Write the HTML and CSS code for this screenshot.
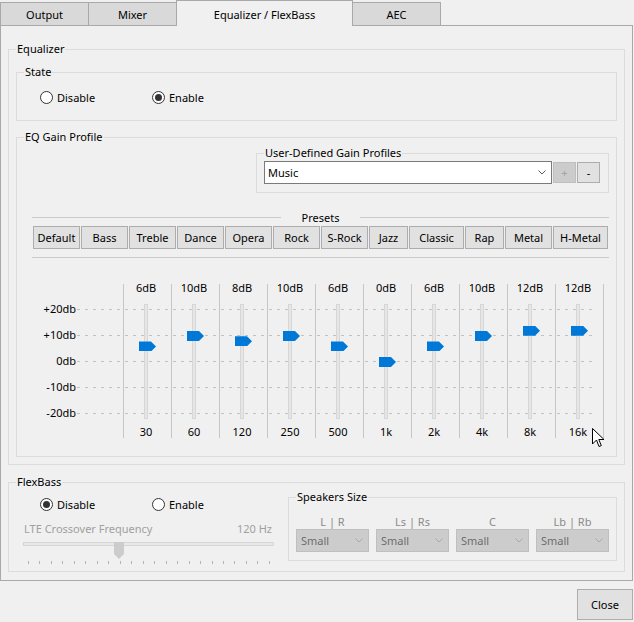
FILE: index.html
```html
<!DOCTYPE html>
<html>
<head>
<meta charset="utf-8">
<link rel="stylesheet" href="styles.css">
</head>
<body>
<div class="window">
  <div class="tabs">
    <div class="tab">Output</div>
    <div class="tab">Mixer</div>
    <div class="tab active">Equalizer / FlexBass</div>
    <div class="tab">AEC</div>
  </div>
  <div class="panel">
    <fieldset class="group eq">
      <legend>Equalizer</legend>
      <fieldset class="group state">
        <legend>State</legend>
        <div class="radios">
          <label class="radio"><span class="circle"></span>Disable</label>
          <label class="radio on"><span class="circle"></span>Enable</label>
        </div>
      </fieldset>
      <fieldset class="group gain">
        <legend>EQ Gain Profile</legend>
        <fieldset class="group user">
          <legend>User-Defined Gain Profiles</legend>
          <div class="user-row">
            <div class="combo"><span>Music</span><svg width="8" height="5" viewBox="0 0 8 5"><path d="M0.5 0.5 L4 4 L7.5 0.5" fill="none" stroke="#5a5a5a" stroke-width="1"/></svg></div>
            <div class="mini disabled">+</div>
            <div class="mini">-</div>
          </div>
        </fieldset>
        <div class="gain-body">
          <div class="presets-head"><span class="rule"></span><span class="ptitle">Presets</span><span class="rule"></span></div>
          <div class="presets">
            <button class="btn">Default</button>
            <button class="btn">Bass</button>
            <button class="btn">Treble</button>
            <button class="btn">Dance</button>
            <button class="btn">Opera</button>
            <button class="btn">Rock</button>
            <button class="btn">S-Rock</button>
            <button class="btn">Jazz</button>
            <button class="btn">Classic</button>
            <button class="btn">Rap</button>
            <button class="btn">Metal</button>
            <button class="btn">H-Metal</button>
          </div>
          <div class="hr"></div>
          <div class="eq-area">
            <div class="scale">
              <div class="srow"><span class="slabel">+20db</span><span class="dash"></span></div>
              <div class="srow"><span class="slabel">+10db</span><span class="dash"></span></div>
              <div class="srow"><span class="slabel">0db</span><span class="dash"></span></div>
              <div class="srow"><span class="slabel">-10db</span><span class="dash"></span></div>
              <div class="srow"><span class="slabel">-20db</span><span class="dash"></span></div>
            </div>
            <div class="bands">
              <div class="band"><span class="blabel top">6dB</span><div class="track"><span class="thumb" style="top:36.4px"></span></div><span class="blabel bottom">30</span></div>
              <div class="band"><span class="blabel top">10dB</span><div class="track"><span class="thumb" style="top:26px"></span></div><span class="blabel bottom">60</span></div>
              <div class="band"><span class="blabel top">8dB</span><div class="track"><span class="thumb" style="top:31.2px"></span></div><span class="blabel bottom">120</span></div>
              <div class="band"><span class="blabel top">10dB</span><div class="track"><span class="thumb" style="top:26px"></span></div><span class="blabel bottom">250</span></div>
              <div class="band"><span class="blabel top">6dB</span><div class="track"><span class="thumb" style="top:36.4px"></span></div><span class="blabel bottom">500</span></div>
              <div class="band"><span class="blabel top">0dB</span><div class="track"><span class="thumb" style="top:52px"></span></div><span class="blabel bottom">1k</span></div>
              <div class="band"><span class="blabel top">6dB</span><div class="track"><span class="thumb" style="top:36.4px"></span></div><span class="blabel bottom">2k</span></div>
              <div class="band"><span class="blabel top">10dB</span><div class="track"><span class="thumb" style="top:26px"></span></div><span class="blabel bottom">4k</span></div>
              <div class="band"><span class="blabel top">12dB</span><div class="track"><span class="thumb" style="top:20.8px"></span></div><span class="blabel bottom">8k</span></div>
              <div class="band"><span class="blabel top">12dB</span><div class="track"><span class="thumb" style="top:20.8px"></span></div><span class="blabel bottom">16k</span></div>
            </div>
          </div>
        </div>
      </fieldset>
    </fieldset>

    <fieldset class="group flex">
      <legend>FlexBass</legend>
      <div class="flex-row">
        <div class="flex-left">
          <div class="radios">
            <label class="radio on"><span class="circle"></span>Disable</label>
            <label class="radio"><span class="circle"></span>Enable</label>
          </div>
          <div class="lte"><span>LTE Crossover Frequency</span><span>120 Hz</span></div>
          <div class="slider"><div class="strack"></div><span class="sthumb"></span></div>
          <div class="ticks">
            <i></i><i></i><i></i><i></i><i></i><i></i><i></i><i></i><i></i><i></i><i></i>
            <i></i><i></i><i></i><i></i><i></i><i></i><i></i><i></i><i></i><i></i><i></i>
          </div>
        </div>
        <fieldset class="group speakers">
          <legend>Speakers Size</legend>
          <div class="spk-grid">
            <span class="spk-label">L | R</span>
            <span class="spk-label">Ls | Rs</span>
            <span class="spk-label">C</span>
            <span class="spk-label">Lb | Rb</span>
            <div class="scombo"><span>Small</span><svg width="8" height="5" viewBox="0 0 8 5"><path d="M0.5 0.5 L4 4 L7.5 0.5" fill="none" stroke="#a8a8a8" stroke-width="1"/></svg></div>
            <div class="scombo"><span>Small</span><svg width="8" height="5" viewBox="0 0 8 5"><path d="M0.5 0.5 L4 4 L7.5 0.5" fill="none" stroke="#a8a8a8" stroke-width="1"/></svg></div>
            <div class="scombo"><span>Small</span><svg width="8" height="5" viewBox="0 0 8 5"><path d="M0.5 0.5 L4 4 L7.5 0.5" fill="none" stroke="#a8a8a8" stroke-width="1"/></svg></div>
            <div class="scombo"><span>Small</span><svg width="8" height="5" viewBox="0 0 8 5"><path d="M0.5 0.5 L4 4 L7.5 0.5" fill="none" stroke="#a8a8a8" stroke-width="1"/></svg></div>
          </div>
        </fieldset>
      </div>
    </fieldset>
  </div>
  <div class="footer"><button class="btn close">Close</button></div>
  <svg class="cursor" width="13" height="20" viewBox="0 0 13 20"><path d="M0.5 0.5 V16 L4.5 12 L7 18.5 L9.3 17.6 L6.8 11.5 H12 Z" fill="#fff" stroke="#000" stroke-width="1" stroke-linejoin="miter"/></svg>
</div>
</body>
</html>
```

FILE: styles.css
```css
* { box-sizing: border-box; }

body {
  margin: 0;
  background: #f0f0f0;
  font-family: "Noto Sans", "Liberation Sans", sans-serif;
  font-size: 11px;
  line-height: 14px;
  color: #000;
}

.window {
  width: 634px;
  height: 622px;
  position: relative;
  overflow: hidden;
}

/* Tabs */
.tabs {
  display: flex;
  align-items: flex-start;
  height: 25px;
}
.tab {
  width: 89px;
  height: 23px;
  margin-top: 2px;
  border: 1px solid #a9a9a9;
  border-bottom: none;
  background: #d9d9d9;
  text-align: center;
  padding-top: 5px;
  line-height: 14px;
}
.tab + .tab { margin-left: -1px; }
.tab.active {
  width: 177px;
  height: 26px;
  margin-top: 0;
  padding-top: 7px;
  background: #f0f0f0;
  position: relative;
  z-index: 1;
}

.panel {
  width: 633px;
  border: 1px solid #a9a9a9;
  padding: 16px 7px 8px 7px;
}

/* Group boxes */
.group {
  margin: 0;
  min-width: 0;
  border: 1px solid #dcdcdc;
  padding: 0 7px;
}
.group > legend {
  padding: 0 1px 2px;
  line-height: 13px;
}

.eq { padding-bottom: 7px; }

.state {
  margin-top: 8px;
  padding-top: 10px;
  padding-bottom: 15px;
}
.state .radios { margin-left: 16px; }

.radios { display: flex; }
.radio {
  display: inline-flex;
  align-items: center;
  gap: 4px;
  line-height: 15px;
}
.radios .radio:first-child { width: 112px; }
.circle {
  width: 13px;
  height: 13px;
  border: 1px solid #333;
  border-radius: 50%;
  background: #fff;
  display: flex;
  align-items: center;
  justify-content: center;
}
.radio.on .circle::after {
  content: "";
  width: 7px;
  height: 7px;
  border-radius: 50%;
  background: #333;
}

.gain {
  margin-top: 9px;
  padding-bottom: 18px;
}

.user {
  margin-top: 1px;
  margin-left: 232px;
  padding-bottom: 8px;
}
.user-row {
  display: flex;
  align-items: center;
}
.combo {
  width: 288px;
  height: 23px;
  border: 1px solid #7a7a7a;
  background: #fff;
  display: flex;
  align-items: center;
  justify-content: space-between;
  padding: 0 5px 0 3px;
}
.mini {
  width: 23px;
  height: 21px;
  margin-left: 1px;
  border: 1px solid #adadad;
  background: #e1e1e1;
  display: flex;
  align-items: center;
  justify-content: center;
}
.mini.disabled {
  background: #cccccc;
  border-color: #bfbfbf;
  color: #a3a3a3;
}

.gain-body { margin-left: 8px; }

.presets-head {
  margin-top: 17px;
  height: 15px;
  display: flex;
  align-items: center;
  line-height: 15px;
}
.rule {
  flex: 1;
  height: 1px;
  background: #cacaca;
}
.ptitle { padding: 0 21px; }

.presets {
  margin-top: 1px;
  margin-left: 1px;
  display: grid;
  grid-template-columns: 47px 47px 47px 47px 47px 47px 47px 39px 55px 39px 47px 55px;
  column-gap: 1px;
}
.btn {
  font: inherit;
  color: #000;
  height: 23px;
  padding: 0;
  border: 1px solid #adadad;
  background: #e1e1e1;
  line-height: 14px;
}

.hr {
  margin-top: 8px;
  height: 1px;
  background: #cacaca;
}

/* EQ sliders */
.eq-area {
  margin-top: 26px;
  display: grid;
  grid-template-columns: 91px 481px;
  grid-template-rows: 154px;
}
.scale {
  grid-row: 1;
  grid-column: 1 / 3;
  margin-right: 11px;
  padding-top: 12px;
}
.srow {
  height: 26px;
  display: flex;
  align-items: center;
}
.slabel {
  width: 44px;
  text-align: right;
  line-height: 14px;
}
.dash {
  flex: 1;
  height: 1px;
  margin-left: 1px;
  background: repeating-linear-gradient(90deg, #c2c2c2 0 3px, transparent 3px 8px);
}
.bands {
  grid-row: 1;
  grid-column: 2;
  display: flex;
  border-right: 1px solid #c6c6c6;
}
.band {
  width: 48px;
  height: 154px;
  border-left: 1px solid #c6c6c6;
  padding-right: 3px;
  display: flex;
  flex-direction: column;
  align-items: center;
}
.blabel {
  line-height: 12px;
  white-space: nowrap;
}
.blabel.top { margin-top: -2px; }
.blabel.bottom { margin-top: 7px; }
.track {
  margin-top: 10px;
  width: 4px;
  height: 115px;
  border: 1px solid #d6d6d6;
  background: #e6e6e6;
  position: relative;
}
.thumb {
  position: absolute;
  left: -6px;
  width: 17px;
  height: 10px;
  background: #0078d7;
  clip-path: polygon(0 0, 12px 0, 17px 5px, 12px 10px, 0 10px);
}

/* FlexBass */
.flex {
  margin-top: 10px;
  padding-bottom: 7px;
}
.flex-row {
  display: flex;
  align-items: flex-start;
}
.flex-left {
  width: 251px;
  margin-left: 7px;
  padding-top: 7px;
}
.flex-left .radios { margin-left: 17px; }
.lte {
  margin-top: 10px;
  display: flex;
  justify-content: space-between;
  padding: 0 2px 0 1px;
  color: #a0a0a0;
}
.slider {
  position: relative;
  height: 17px;
  margin-top: 3px;
}
.strack {
  margin-top: 6px;
  height: 4px;
  border: 1px solid #d6d6d6;
  background: #e7e9e8;
}
.sthumb {
  position: absolute;
  left: 91px;
  top: 0;
  width: 10px;
  height: 17px;
  background: #cccccc;
  clip-path: polygon(0 0, 100% 0, 100% 12px, 5px 17px, 0 12px);
}
.ticks {
  margin-top: 2px;
  height: 3px;
  display: flex;
  justify-content: space-between;
  padding: 0 4px 0 5px;
}
.ticks i {
  width: 1px;
  height: 3px;
  background: #b4b4b4;
}

.speakers {
  margin-left: 14px;
  width: 329px;
  padding-top: 10px;
  padding-bottom: 8px;
}
.spk-grid {
  display: grid;
  grid-template-columns: repeat(4, 73px);
  column-gap: 7px;
}
.spk-label {
  text-align: center;
  line-height: 14px;
  color: #8a8a8a;
}
.scombo {
  height: 23px;
  border: 1px solid #bfbfbf;
  background: #cccccc;
  color: #6d6d6d;
  display: flex;
  align-items: center;
  justify-content: space-between;
  padding: 0 5px 0 4px;
}

.footer {
  display: flex;
  justify-content: flex-end;
  padding-right: 1px;
  margin-top: 8px;
}
.btn.close {
  width: 56px;
  height: 31px;
}

.cursor {
  position: absolute;
  left: 592px;
  top: 428px;
}
```
